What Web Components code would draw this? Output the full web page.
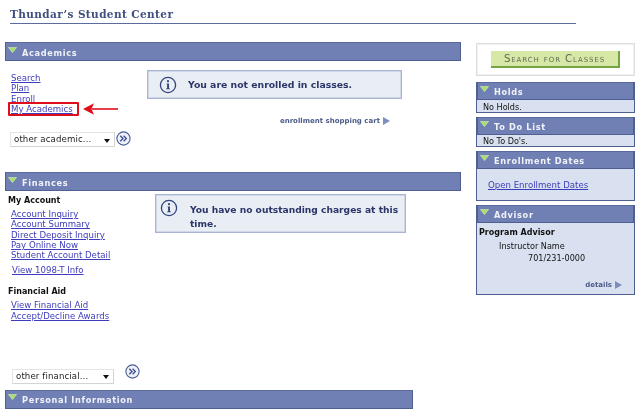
<!DOCTYPE html>
<html lang="en"><head><meta charset="utf-8"><title>Student Center</title>
<style>
html,body{margin:0;padding:0;background:#fff}
body{width:640px;height:415px;overflow:hidden;font:9px "DejaVu Sans",Verdana,sans-serif;color:#000}
</style></head><body>
<template id="t-page"><style>
:host{display:block;width:640px;height:415px;box-sizing:border-box;padding:8px 0 0 5px;position:relative;filter:blur(.3px)}
.title{margin:0 0 0 5px;width:566px;height:15px;font:bold 10.5px/12px "DejaVu Serif",serif;letter-spacing:.39px;color:#3f4f7f;border-bottom:1px solid #5a6c9c;box-sizing:content-box}
.cols{display:flex;gap:15px;margin-top:18px;align-items:flex-start}
.left{width:456px;display:flex;flex-direction:column}
.right{width:159px;display:flex;flex-direction:column;gap:4px;padding-top:1px}
</style><h1 class="title"><slot name="title"></slot></h1>
<div class="cols"><div class="left"><slot name="left"></slot></div><div class="right"><slot name="right"></slot></div></div><slot name="over"></slot></template>

<template id="t-bar"><style>
:host{display:flex;align-items:center;box-sizing:border-box;height:var(--h,19px);background:#7080b5;border:1px solid #4f5f92;border-top-color:#5a6a9c;color:#f0f2f8;font:bold 8.2px/1 "DejaVu Sans",sans-serif;letter-spacing:.68px;padding:var(--pt,3px) 0 0 2px;gap:5px;position:relative}
svg{width:9px;height:6px;flex:none;margin-top:-7px}
</style><svg viewBox="0 0 9 6"><path d="M.4 .4H8.6L4.5 5.6Z" fill="#a6e06a" stroke="#d8f0c0" stroke-width=".6"/></svg><span><slot></slot></span></template>

<template id="t-info"><style>
:host{display:flex;box-sizing:border-box;background:#e9edf4;border:1px solid #a7b4d3;box-shadow:inset 0 0 0 .5px #b8c3dc;color:#2a3568;font:bold var(--fs,9.3px)/14px "DejaVu Sans",sans-serif}
svg{width:18px;height:18px;flex:none}
span{padding-top:var(--tp,0)}
</style><svg viewBox="0 0 18 18"><circle cx="9" cy="9" r="7.6" fill="none" stroke="#33457f" stroke-width="1.3"/><path d="M7.6 7.4H10V12.4H11V13.3H7V12.4H8.1V8.3H7.6Z" fill="#33457f"/><circle cx="9" cy="5.2" r="1.1" fill="#33457f"/></svg><span><slot></slot></span></template>

<template id="t-links"><style>
:host{display:flex;flex-direction:column;font:8.6px/10.3px "DejaVu Sans",sans-serif}
::slotted(a){color:#3d3dbb;text-decoration:underline;width:max-content}
</style><slot></slot></template>

<template id="t-pick"><style>
:host{display:flex;align-items:flex-start;gap:var(--g,0)}
.s{box-sizing:border-box;height:15px;width:var(--w,106px);background:#fff;border:1px solid #e4e4e4;border-right-color:#d4d4d4;border-bottom-color:#d4d4d4;display:flex;align-items:center;justify-content:space-between;padding:0 4px 0 3px;font:8.6px/1 "DejaVu Sans",sans-serif;letter-spacing:.12px;color:#222}
.s i{width:0;height:0;border:3.5px solid transparent;border-top:4px solid #111;border-bottom:0;margin-top:2px}
svg{width:15px;height:15px;flex:none;margin-top:var(--b,-1px)}
</style><div class="s"><span><slot></slot></span><i></i></div><svg viewBox="0 0 15 15"><circle cx="7.5" cy="7.5" r="6.6" fill="#eef1f8" stroke="#4a5c96" stroke-width="1.1"/><path d="M4.3 4.8L7 7.5L4.3 10.2M7.6 4.8L10.3 7.5L7.6 10.2" fill="none" stroke="#3a4c8c" stroke-width="1.3"/></svg></template>

<template id="t-more"><style>
:host{display:flex;justify-content:flex-end;align-items:center;gap:3px;font:bold 7px/10px "DejaVu Sans",sans-serif;color:#4c5a88}
i{width:0;height:0;border:4px solid transparent;border-left:7px solid #7d8dbd;border-right:0}
</style><span><slot></slot></span><i></i></template>

<template id="t-pagelet"><style>
:host{display:block;box-sizing:border-box;background:#d9e1f0;border:1px solid #4f5f92;border-top:0;font:8.1px/12px "DejaVu Sans",sans-serif;color:#111;--h:18px}
</style><slot name="head"></slot><slot></slot></template>

<template id="t-action"><style>
:host{display:flex;box-sizing:border-box;height:33px;border:1px solid #dedede;box-shadow:inset 0 0 0 1px #f0f0f0;padding:7px 14px 7px;background:#fff}
div{flex:1;box-sizing:border-box;padding-top:2px;background:#d7e7a6;border-right:2px solid #74a343;border-bottom:2px solid #74a343;display:flex;align-items:center;justify-content:center;font:10.2px/1 "DejaVu Sans",sans-serif;font-variant:small-caps;letter-spacing:.9px;color:#5b6f55}
</style><div><slot></slot></div></template>

<template id="t-callout"><style>
:host{position:absolute;left:8px;top:102px;display:flex;align-items:center;gap:4px}
.b{width:71px;height:14px;box-sizing:border-box;border:2px solid #e00e1c;border-radius:1px}
svg{width:35px;height:12px}
</style><div class="b"></div><svg viewBox="0 0 35 12"><path d="M35 6H9" stroke="#e00e1c" stroke-width="1.6"/><path d="M0 6L11 .3L8.5 6L11 11.7Z" fill="#e00e1c"/></svg></template>

<su-page>
<span slot="title">Thundar’s Student Center</span>

<div slot="left" style="height:130px">
<su-bar>Academics</su-bar>
<div style="display:flex;padding-top:9px">
<div style="width:142px;padding:3px 0 0 6px;box-sizing:border-box">
<su-links><a href="#">Search</a><a href="#">Plan</a><a href="#">Enroll</a><a href="#">My Academics</a></su-links>
<su-pick style="margin:18px 0 0 -1px;--w:105px;--g:1px">other academic...</su-pick>
</div>
<div style="width:255px">
<su-info style="height:29px;align-items:center;padding:0 0 0 11px;gap:11px">You are not enrolled in classes.</su-info>
<su-more style="margin:17px 12px 0 0">enrollment shopping cart</su-more>
</div>
</div>
</div>

<div slot="left" style="height:218px">
<su-bar>Finances</su-bar>
<div style="display:flex;padding-top:3px">
<div style="width:150px;padding:1px 0 0 3px;box-sizing:border-box">
<div style="font:bold 8px/12px 'DejaVu Sans',sans-serif;color:#111">My Account</div>
<su-links style="margin:2px 0 0 3px"><a href="#">Account Inquiry</a><a href="#">Account Summary</a><a href="#">Direct Deposit Inquiry</a><a href="#">Pay Online Now</a><a href="#">Student Account Detail</a></su-links>
<su-links style="margin:5px 0 0 4px"><a href="#">View 1098-T Info</a></su-links>
<div style="font:bold 8px/12px 'DejaVu Sans',sans-serif;color:#111;margin-top:10px">Financial Aid</div>
<su-links style="margin:2.5px 0 0 3px"><a href="#">View Financial Aid</a><a href="#">Accept/Decline Awards</a></su-links>
<su-pick style="margin:48px 0 0 4px;--w:102px;--g:11px;--b:-5px">other financial...</su-pick>
</div>
<su-info style="width:251px;height:39px;padding:4px 0 0 4px;gap:12px;--tp:4px;--fs:9.15px">You have no outstanding charges at this time.</su-info>
</div>
</div>

<su-bar slot="left" style="width:408px;--pt:1px">Personal Information</su-bar>

<su-action slot="right">Search for Classes</su-action>
<su-pagelet slot="right" style="margin-top:2px"><su-bar slot="head">Holds</su-bar><div style="padding:1px 6px 0;height:12px;box-sizing:border-box">No Holds.</div></su-pagelet>
<su-pagelet slot="right"><su-bar slot="head">To Do List</su-bar><div style="padding:0 6px;height:11px">No To Do's.</div></su-pagelet>
<su-pagelet slot="right"><su-bar slot="head">Enrollment Dates</su-bar><div style="padding:11px 11px 0;height:31px;box-sizing:border-box"><su-links><a href="#">Open Enrollment Dates</a></su-links></div></su-pagelet>
<su-pagelet slot="right"><su-bar slot="head">Advisor</su-bar><div style="height:71px;padding:4px 2px 0;box-sizing:border-box;display:flex;flex-direction:column">
<b style="font-size:8px">Program Advisor</b>
<span style="margin:1px 0 0 20px">Instructor Name</span>
<span style="margin-left:49px">701/231-0000</span>
<su-more style="margin:16px 10px 0 0">details</su-more>
</div></su-pagelet>

<su-callout slot="over"></su-callout>
</su-page>

<script>
const defs={'su-page':'t-page','su-bar':'t-bar','su-info':'t-info','su-links':'t-links','su-pick':'t-pick','su-more':'t-more','su-pagelet':'t-pagelet','su-action':'t-action','su-callout':'t-callout'};
for(const [name,id] of Object.entries(defs)){
  customElements.define(name,class extends HTMLElement{
    constructor(){super();this.attachShadow({mode:'open'}).appendChild(document.getElementById(id).content.cloneNode(true));}
  });
}
</script>
</body></html>
